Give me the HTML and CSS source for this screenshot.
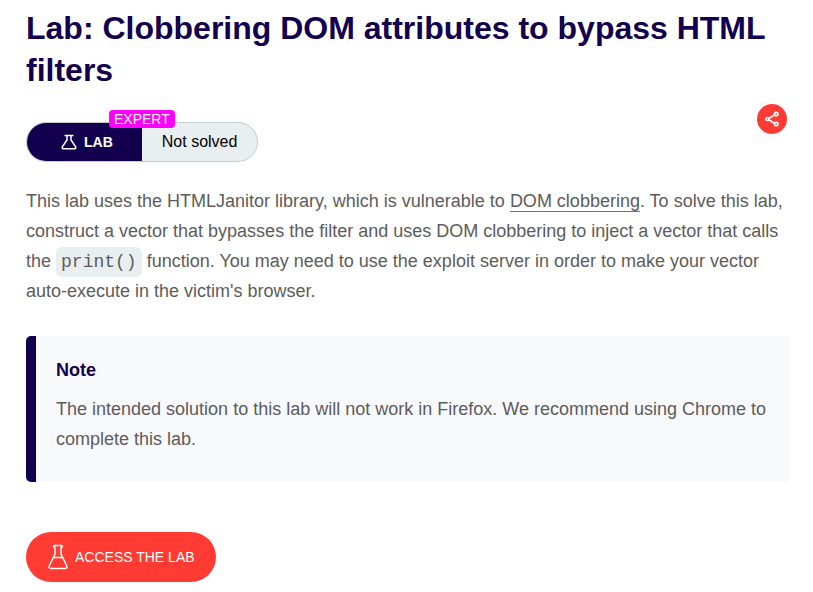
FILE: index.html
```html
<!DOCTYPE html>
<html lang="en">
<head>
<meta charset="utf-8">
<meta name="viewport" content="width=device-width, initial-scale=1">
<title>Lab: Clobbering DOM attributes to bypass HTML filters</title>
<link rel="stylesheet" href="styles.css">
</head>
<body>
<main class="page">
  <h1 class="title">Lab: Clobbering DOM attributes to bypass HTML filters</h1>
  <div class="status-row">
    <div class="status">
      <span class="status-type">
        <svg class="flask-small" viewBox="0 0 16 16" aria-hidden="true"><path d="M3.500 1.500h9M6 1.500v4.500L1.500 12.500q-1 2.200 1 2.200h11q2 0 1-2.200L10 6v-4.500"/></svg>
        LAB
      </span>
      <span class="status-state">Not solved</span>
      <span class="level">EXPERT</span>
    </div>
    <button class="share" type="button" aria-label="Share">
      <svg viewBox="0 0 30 30" aria-hidden="true"><path d="M12.200 14.200l5.200-3.200M12.200 16l5.200 3.200"/><circle cx="10.500" cy="15" r="1.500"/><circle cx="19.200" cy="10" r="1.700"/><circle cx="19.200" cy="20" r="1.700"/></svg>
    </button>
  </div>
  <p class="text">This lab uses the HTMLJanitor library, which is vulnerable to <a class="link" href="#">DOM clobbering</a>. To solve this lab, construct a vector that bypasses the filter and uses DOM clobbering to inject a vector that calls the <code class="code">print()</code> function. You may need to use the exploit server in order to make your vector auto-execute in the victim's browser.</p>
  <section class="note">
    <h2 class="note-title">Note</h2>
    <p class="text">The intended solution to this lab will not work in Firefox. We recommend using Chrome to complete this lab.</p>
  </section>
  <a class="access" href="#">
    <svg class="flask-large" viewBox="0 0 20 26" aria-hidden="true"><path d="M6.500 1.500h7q1 0 1 .8t-1 .8l-.5 1v6L18.600 21.500q1.200 3-1.600 3H3q-2.800 0-1.600-3L7 10.100v-6l-.5-1q-1 0-1-.8t1-.8zM5.500 13.500h9"/></svg>
    ACCESS THE LAB
  </a>
</main>
</body>
</html>
```
FILE: styles.css
```css
* {
  box-sizing: border-box;
}

body {
  margin: 0;
  background: #fff;
  color: #5c5c5b;
  font-family: "Liberation Sans", Arial, sans-serif;
}

.page {
  padding: 7px 22px 10px 26px;
}

.title {
  margin: 0;
  color: #12004f;
  font-size: 32px;
  line-height: 42px;
}

.status-row {
  display: flex;
  justify-content: space-between;
  align-items: flex-start;
  margin: 13px 4px 24px 0;
}

.status {
  position: relative;
  display: flex;
  height: 40px;
  margin-top: 18px;
  border: 1px solid #c5ccd1;
  border-radius: 20px;
  background: #e9eef1;
  line-height: 38px;
}

.status-type {
  display: flex;
  align-items: center;
  gap: 7px;
  padding: 0 29px 0 34px;
  border-radius: 20px 0 0 20px;
  background: #12004f;
  color: #fff;
  font-size: 14px;
  font-weight: bold;
}

.status-state {
  padding: 0 20px;
  color: #000;
  font-size: 16px;
}

.level {
  position: absolute;
  top: -13px;
  left: 82px;
  padding: 0 5px;
  border-radius: 4px;
  background: #f0f;
  color: #fff;
  font-size: 14px;
  line-height: 18px;
}

svg {
  fill: none;
  stroke: #fff;
}

.flask-small {
  width: 16px;
  height: 16px;
  stroke-width: 1.5;
}

.share {
  width: 30px;
  height: 30px;
  padding: 0;
  border: 0;
  border-radius: 50%;
  background: #ff3b33;
}

.share svg {
  display: block;
  stroke-width: 1.7;
}

.text {
  margin: 0;
  font-size: 18px;
  line-height: 30px;
}

.link {
  border-bottom: 1px solid #ff3b33;
  color: inherit;
  text-decoration: none;
}

.code {
  padding: 5px;
  border-radius: 6px;
  background: #e9eef1;
  font-family: "Liberation Mono", monospace;
  font-size: 18px;
  line-height: 20px;
}

.note {
  margin: 30px 0 50px;
  padding: 19px 20px 28px;
  border-left: 10px solid #12004f;
  border-radius: 5px;
  background: #f8f9fd;
}

.note-title {
  margin: 0 0 9px;
  color: #12004f;
  font-size: 18px;
  line-height: 30px;
}

.access {
  display: inline-flex;
  align-items: center;
  gap: 7px;
  height: 50px;
  padding: 0 21px 0 22px;
  border-radius: 25px;
  background: #ff3b33;
  color: #fff;
  font-size: 14px;
  text-decoration: none;
}

.flask-large {
  width: 20px;
  height: 26px;
  stroke-width: 1.5;
}
```
